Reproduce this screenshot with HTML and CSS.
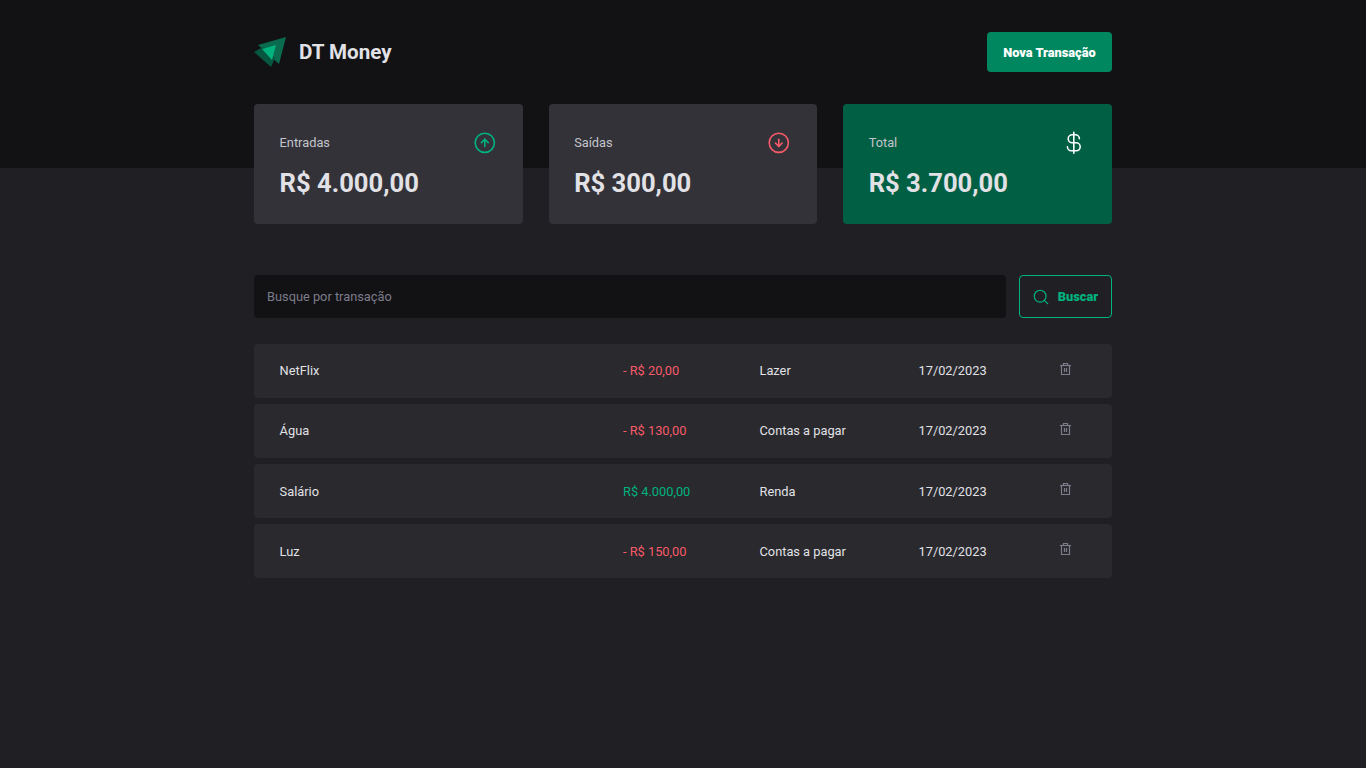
FILE: index.html
```html
<!DOCTYPE html>
<html lang="pt-BR">
<head>
	<meta charset="UTF-8">
	<title>DT Money</title>
	<link rel="stylesheet" href="styles.css">
</head>
<body>
	<header class="header">
		<div class="header_content">
			<div class="logo">
				<svg class="logo_icon" width="33" height="32" viewBox="0 0 33 32">
					<polygon points="32,1 4,9 25,28" fill="#0A6B4E"/>
					<polygon points="0,16 17,31 21,22 9,11" fill="#07563F"/>
					<polygon points="8,13 22,9 18,24" fill="#00B37E"/>
				</svg>
				<span class="logo_name">DT Money</span>
			</div>
			<button class="new_transaction">Nova Transação</button>
		</div>
	</header>

	<main class="main">
		<section class="summary">
			<div class="card">
				<div class="card_top">
					<span>Entradas</span>
					<svg width="25.6" height="25.6" viewBox="0 0 256 256" fill="none" stroke="#00B37E" stroke-width="16" stroke-linecap="round" stroke-linejoin="round">
						<circle cx="128" cy="128" r="96"/>
						<polyline points="94,126 128,92 162,126"/>
						<line x1="128" y1="164" x2="128" y2="92"/>
					</svg>
				</div>
				<strong>R$ 4.000,00</strong>
			</div>
			<div class="card">
				<div class="card_top">
					<span>Saídas</span>
					<svg width="25.6" height="25.6" viewBox="0 0 256 256" fill="none" stroke="#F75A68" stroke-width="16" stroke-linecap="round" stroke-linejoin="round">
						<circle cx="128" cy="128" r="96"/>
						<polyline points="94,130 128,164 162,130"/>
						<line x1="128" y1="92" x2="128" y2="164"/>
					</svg>
				</div>
				<strong>R$ 300,00</strong>
			</div>
			<div class="card card_total">
				<div class="card_top">
					<span>Total</span>
					<svg width="25.6" height="25.6" viewBox="0 0 256 256" fill="none" stroke="#FFFFFF" stroke-width="16" stroke-linecap="round" stroke-linejoin="round">
						<line x1="128" y1="24" x2="128" y2="232"/>
						<path d="M184,88a40,40,0,0,0-40-40H112a40,40,0,0,0,0,80h40a40,40,0,0,1,0,80H104a40,40,0,0,1-40-40"/>
					</svg>
				</div>
				<strong>R$ 3.700,00</strong>
			</div>
		</section>

		<form class="search">
			<input class="search_input" type="text" placeholder="Busque por transação">
			<button class="search_button" type="button">
				<svg width="18" height="18" viewBox="0 0 256 256" fill="none" stroke="#00B37E" stroke-width="16" stroke-linecap="round">
					<circle cx="116" cy="116" r="84"/>
					<line x1="175" y1="175" x2="224" y2="224"/>
				</svg>
				Buscar
			</button>
		</form>

		<table class="transactions">
			<tbody>
				<tr>
					<td class="col_name">NetFlix</td>
					<td class="col_price outcome">- R$ 20,00</td>
					<td class="col_category">Lazer</td>
					<td class="col_date">17/02/2023</td>
					<td class="col_delete"><svg class="trash" width="11" height="12" viewBox="0 0 11 12" fill="none" stroke="#7C7C8A" stroke-width="1.2"><path d="M0,2.5H11"/><path d="M3.5,2.5V0.5H7.5V2.5"/><path d="M1.5,2.5V11.5H9.5V2.5"/><path d="M4.5,5V9M6.5,5V9"/></svg></td>
				</tr>
				<tr>
					<td class="col_name">Água</td>
					<td class="col_price outcome">- R$ 130,00</td>
					<td class="col_category">Contas a pagar</td>
					<td class="col_date">17/02/2023</td>
					<td class="col_delete"><svg class="trash" width="11" height="12" viewBox="0 0 11 12" fill="none" stroke="#7C7C8A" stroke-width="1.2"><path d="M0,2.5H11"/><path d="M3.5,2.5V0.5H7.5V2.5"/><path d="M1.5,2.5V11.5H9.5V2.5"/><path d="M4.5,5V9M6.5,5V9"/></svg></td>
				</tr>
				<tr>
					<td class="col_name">Salário</td>
					<td class="col_price income">R$ 4.000,00</td>
					<td class="col_category">Renda</td>
					<td class="col_date">17/02/2023</td>
					<td class="col_delete"><svg class="trash" width="11" height="12" viewBox="0 0 11 12" fill="none" stroke="#7C7C8A" stroke-width="1.2"><path d="M0,2.5H11"/><path d="M3.5,2.5V0.5H7.5V2.5"/><path d="M1.5,2.5V11.5H9.5V2.5"/><path d="M4.5,5V9M6.5,5V9"/></svg></td>
				</tr>
				<tr>
					<td class="col_name">Luz</td>
					<td class="col_price outcome">- R$ 150,00</td>
					<td class="col_category">Contas a pagar</td>
					<td class="col_date">17/02/2023</td>
					<td class="col_delete"><svg class="trash" width="11" height="12" viewBox="0 0 11 12" fill="none" stroke="#7C7C8A" stroke-width="1.2"><path d="M0,2.5H11"/><path d="M3.5,2.5V0.5H7.5V2.5"/><path d="M1.5,2.5V11.5H9.5V2.5"/><path d="M4.5,5V9M6.5,5V9"/></svg></td>
				</tr>
			</tbody>
		</table>
	</main>
</body>
</html>
```

FILE: styles.css
```css
* {
	box-sizing: border-box;
	padding: 0;
	margin: 0;
}

body {
	background: #202024;
	color: #E1E1E6;
	font-family: Roboto, sans-serif;
	font-size: 12.8px;
	font-weight: 400;
}

button,
input {
	font-family: Roboto, sans-serif;
}

.header {
	height: 168px;
	padding-top: 32px;
	background: #121214;
}

.header_content {
	width: 858px;
	margin: 0 auto;
	display: flex;
	align-items: center;
	justify-content: space-between;
}

.logo {
	display: flex;
	align-items: center;
	gap: 12px;
}

.logo_name {
	font-size: 20.6px;
	font-weight: 700;
}

.new_transaction {
	width: 125px;
	height: 40px;
	border: 0;
	border-radius: 4px;
	background: #00875F;
	color: #FFFFFF;
	font-size: 12.8px;
	font-weight: 900;
}

.main {
	width: 858px;
	margin: 0 auto;
}

.summary {
	display: grid;
	grid-template-columns: repeat(3, 1fr);
	gap: 25.6px;
	margin-top: -64px;
}

.card {
	height: 120px;
	padding: 25.6px;
	border-radius: 4px;
	background: #323238;
}

.card_total {
	background: #015F43;
}

.card_top {
	height: 25.6px;
	display: flex;
	align-items: center;
	justify-content: space-between;
	color: #C4C4CC;
	margin-bottom: 12px;
}

.card strong {
	display: block;
	font-size: 25.6px;
	line-height: 32px;
	font-weight: 700;
}

.search {
	display: flex;
	gap: 13px;
	margin-top: 51px;
}

.search_input {
	flex: 1;
	height: 43px;
	padding: 13px;
	border: 0;
	border-radius: 4px;
	background: #121214;
	color: #C4C4CC;
	font-size: 12.8px;
}

.search_input::placeholder {
	color: #7C7C8A;
	opacity: 1;
}

.search_button {
	width: 93px;
	height: 43px;
	display: flex;
	align-items: center;
	justify-content: center;
	gap: 8px;
	padding-right: 1px;
	border: 1px solid #00B37E;
	border-radius: 4px;
	background: transparent;
	color: #00B37E;
	font-size: 12.8px;
	font-weight: 900;
}

.transactions {
	width: 100%;
	margin-top: 20px;
	border-collapse: separate;
	border-spacing: 0 6px;
	table-layout: fixed;
}

.transactions td {
	height: 54px;
	background: #29292E;
	color: #E1E1E6;
	padding-bottom: 1px;
}

.transactions tr:nth-child(n+3) td {
	padding-bottom: 0;
}

.col_name {
	width: 369px;
	padding-left: 25.6px;
	border-radius: 4px 0 0 4px;
}

.col_price {
	width: 136.5px;
}

.col_category {
	width: 159px;
}

.col_date {
	width: 141.5px;
}

.transactions td.col_delete {
	padding-bottom: 0;
	border-radius: 0 4px 4px 0;
}

.outcome {
	color: #F75A68 !important;
}

.income {
	color: #00B37E !important;
}

.trash {
	display: block;
	margin-top: -4px;
}
```
